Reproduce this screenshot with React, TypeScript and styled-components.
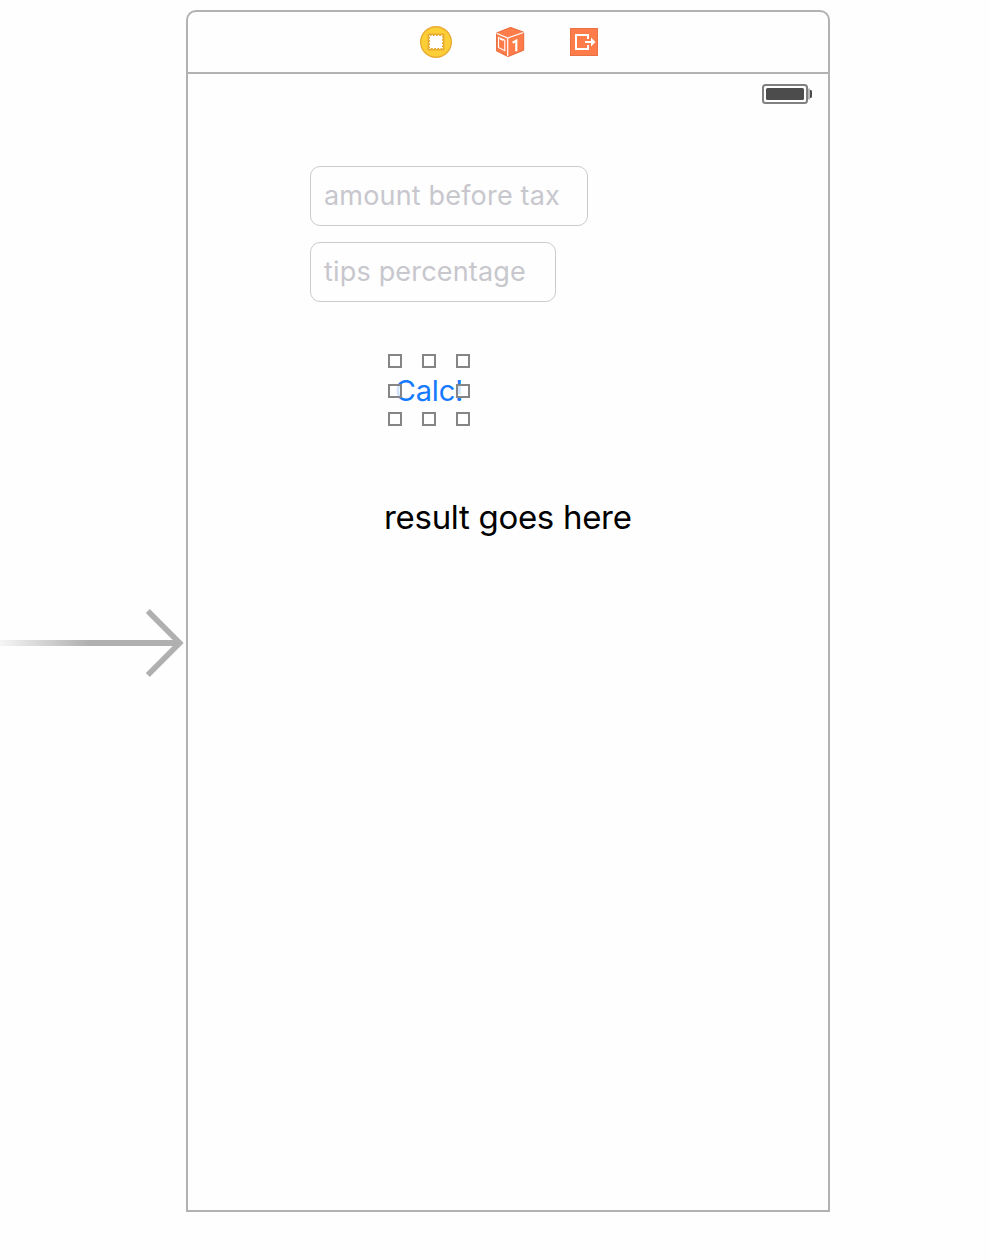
import React from "react";
import styled, { createGlobalStyle } from "styled-components";

const GlobalStyle = createGlobalStyle`
  * { box-sizing: border-box; }
  body { margin: 0; background: #fefefe; font-family: Inter, "Liberation Sans", sans-serif; }
`;

const Canvas = styled.main`
  display: flex;
  align-items: flex-start;
  width: 990px;
  height: 1260px;
  padding-top: 10px;
  overflow: hidden;
  background: #fefefe;
`;

const EntryPoint = styled.div`
  flex: none;
  width: 186px;
  padding-top: 593px;

  svg { display: block; }
`;

const Scene = styled.section`
  flex: none;
  display: flex;
  flex-direction: column;
  width: 644px;
  height: 1202px;
  border: 2px solid #b2b2b2;
  border-radius: 10px 10px 0 0;
`;

const Dock = styled.header`
  display: flex;
  justify-content: center;
  align-items: center;
  gap: 42px;
  height: 62px;
  padding-left: 4px;
  border-bottom: 2px solid #b2b2b2;

  svg { display: block; }
`;

const StatusBar = styled.div`
  display: flex;
  justify-content: flex-end;
  height: 40px;
  padding: 10px 16px 0 0;
`;

const Form = styled.div`
  display: flex;
  flex-direction: column;
  align-items: flex-start;
  padding: 52px 0 0 122px;
`;

const Field = styled.div<{ $width: number }>`
  display: flex;
  align-items: center;
  width: ${(p) => p.$width}px;
  height: 60px;
  margin-bottom: 16px;
  padding: 0 0 1px 13px;
  border: 1px solid #cbcbcb;
  border-radius: 10px;
  color: #c7c7cd;
  font-size: 27px;
  letter-spacing: 0.18px;
  white-space: nowrap;
`;

const CalcButton = styled.div`
  position: relative;
  display: flex;
  align-items: center;
  justify-content: center;
  width: 82px;
  height: 72px;
  margin: 36px 0 0 78px;
  padding-top: 1px;
  color: #147aff;
  font-size: 29px;
  letter-spacing: -0.2px;
`;

const Handle = styled.i<{ $x: number; $y: number }>`
  position: absolute;
  left: ${(p) => p.$x}px;
  top: ${(p) => p.$y}px;
  width: 14px;
  height: 14px;
  border: 2px solid #858585;
  background: rgba(255, 255, 255, 0.8);
`;

const Result = styled.div`
  margin: 70px 0 0 74px;
  color: #000;
  font-size: 33px;
  line-height: 42px;
  letter-spacing: -0.3px;
  white-space: nowrap;
`;

const handles = [
  [0, 0], [34, 0], [68, 0],
  [0, 30], [68, 30],
  [0, 58], [34, 58], [68, 58],
];

const ControllerIcon = () => (
  <svg width="32" height="32" viewBox="0 0 32 32">
    <circle cx="16" cy="16" r="15.3" fill="#fdcf37" stroke="#e9ac32" strokeWidth="1.4" />
    <rect x="7.5" y="7.5" width="17" height="17" rx="1" fill="#e9ac32" />
    <rect x="9" y="9" width="14" height="14" fill="#fff" />
    <rect x="9.5" y="9.5" width="13" height="13" fill="none" stroke="#e9ac32" strokeDasharray="2 1.25" />
  </svg>
);

const ResponderIcon = () => (
  <svg width="32" height="32" viewBox="0 0 32 32">
    <path d="M16.5 1 30 6v18.5L14 31 2 25V7z" fill="#fd7c49" />
    <path d="M2.5 7v17.7L14 30.5 29.7 24V6.3L16.5 1.5z" fill="none" stroke="#e87145" />
    <path d="M2.5 7.2 13.7 12 29.5 6.5M13.7 12v18.2" fill="none" stroke="#fff" strokeWidth="1.2" />
    <path d="m4.5 11.5 6.3 2.8v10.4l-6.3-3.2z" fill="none" stroke="#fff" strokeWidth="1.1" />
    <path d="m6 12.7 3.5 1.6" fill="none" stroke="#fff" strokeWidth="1.6" />
    <path d="m18.6 16.7 3.7-2.1v10.6" fill="none" stroke="#fff" strokeWidth="2.2" />
  </svg>
);

const ExitIcon = () => (
  <svg width="32" height="32" viewBox="0 0 32 32">
    <rect x="2.5" y="2.5" width="27" height="27" fill="#fd7c49" stroke="#e87145" />
    <path d="M20 13V9H8v14h12v-4" fill="none" stroke="#fff" strokeWidth="2" />
    <path d="M17 15h6v-3.5l4.5 4.5-4.5 4.5V17h-6z" fill="#fff" />
  </svg>
);

const Battery = () => (
  <svg width="50" height="20" viewBox="0 0 50 20">
    <rect x="1" y="1" width="44" height="18" rx="2.5" fill="#fff" stroke="#808080" strokeWidth="2" />
    <rect x="4" y="4" width="38" height="12" rx="1.5" fill="#4c4c4c" />
    <path d="M46 4.5h2v11h-2z" fill="#b8b8b8" />
    <path d="M48 6h1l1 1v6l-1 1h-1z" fill="#4c4c4c" />
  </svg>
);

export default function App() {
  return (
    <>
      <GlobalStyle />
      <Canvas>
        <EntryPoint>
          <svg width="186" height="80" viewBox="0 0 186 80">
            <defs>
              <linearGradient id="fade" gradientUnits="userSpaceOnUse" x1="-10" y1="0" x2="88" y2="0">
                <stop offset="0" stopColor="#b0b0b0" stopOpacity="0" />
                <stop offset="1" stopColor="#b0b0b0" />
              </linearGradient>
            </defs>
            <rect x="0" y="37" width="178" height="6" fill="url(#fade)" />
            <path d="M147.8 8l31.9 32L147.8 72" fill="none" stroke="#b0b0b0" strokeWidth="5.6" />
          </svg>
        </EntryPoint>
        <Scene>
          <Dock>
            <ControllerIcon />
            <ResponderIcon />
            <ExitIcon />
          </Dock>
          <StatusBar>
            <Battery />
          </StatusBar>
          <Form>
            <Field $width={278}>amount before tax</Field>
            <Field $width={246}>tips percentage</Field>
            <CalcButton>
              Calc!
              {handles.map(([x, y]) => (
                <Handle key={`${x}-${y}`} $x={x} $y={y} />
              ))}
            </CalcButton>
            <Result>result goes here</Result>
          </Form>
        </Scene>
      </Canvas>
    </>
  );
}
